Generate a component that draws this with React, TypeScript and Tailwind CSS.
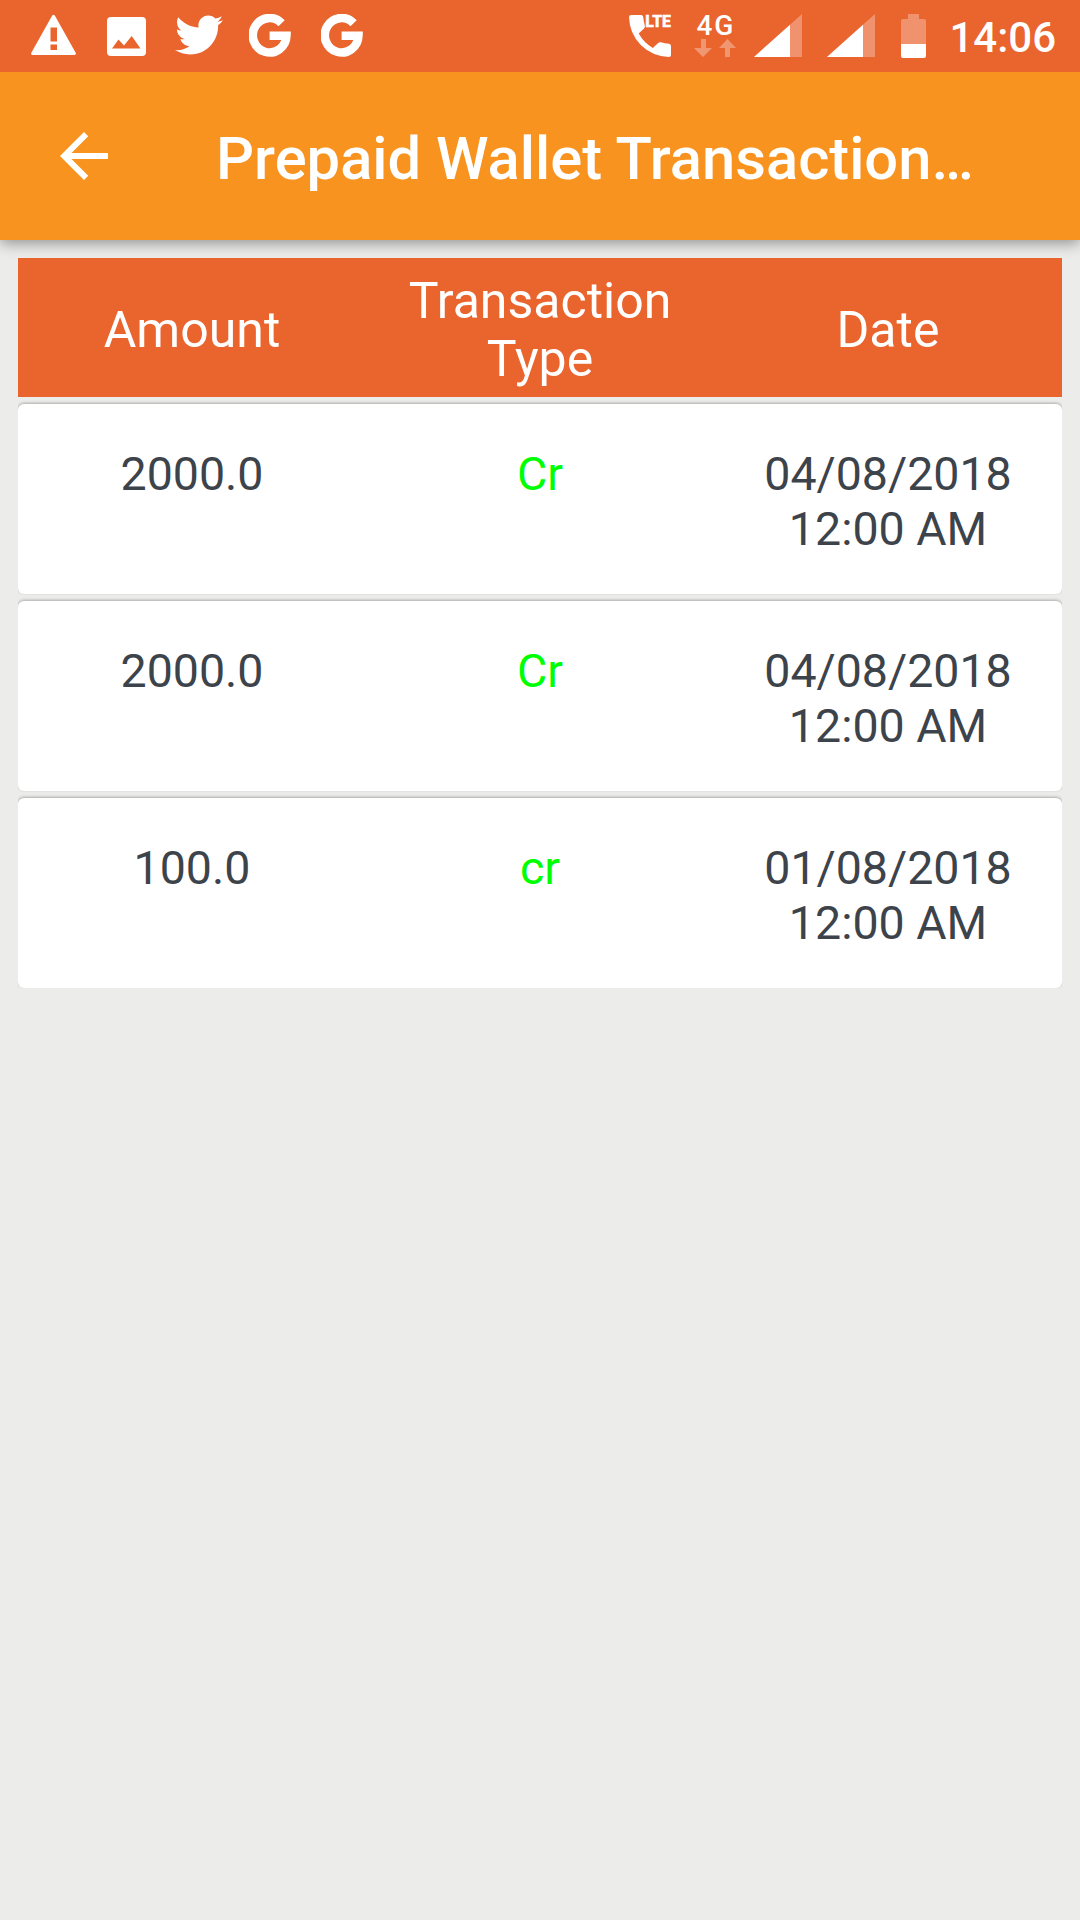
import React from "react";
import { FaTwitter } from "react-icons/fa";

const transactions = [
  { amount: "2000.0", type: "Cr", date: "04/08/2018", time: "12:00 AM" },
  { amount: "2000.0", type: "Cr", date: "04/08/2018", time: "12:00 AM" },
  { amount: "100.0", type: "cr", date: "01/08/2018", time: "12:00 AM" },
];

const GoogleIcon = () => (
  <svg width="42" height="44" viewBox="0 0 42 44" fill="none" stroke="#fff" strokeWidth="8.6">
    <path d="M32.6 9.2A16.8 17.2 0 1 0 37.4 21.8H20.6" />
  </svg>
);

const SignalIcon = () => (
  <svg width="48" height="43" viewBox="0 0 48 43" fill="#fff">
    <path d="M0 43L48 0V43z" opacity="0.3" />
    <path d="M0 43L36 10.75V43z" />
  </svg>
);

const StatusBar = () => (
  <div className="relative z-10 flex h-[72px] items-start bg-[#ea642e] pt-[14px] pl-[31px] text-white">
    <svg width="45" height="42" viewBox="0 0 45 42" fill="#fff">
      <path
        fillRule="evenodd"
        d="M21.2 1.6Q22.5 0 23.8 1.6L44.8 39Q45.4 41 43.5 41H1.5Q-.4 41 .2 39zM19.5 13.5v14h6.500v-14zM19.5 30.500v5.500h6.500v-5.500z"
      />
    </svg>
    <svg className="mt-[3px] ml-[31px]" width="39" height="39" viewBox="0 0 39 39" fill="#fff">
      <path
        fillRule="evenodd"
        d="M4 0h31a4 4 0 0 1 4 4v31a4 4 0 0 1-4 4H4a4 4 0 0 1-4-4V4a4 4 0 0 1 4-4zM5 31.500h28.500L24.700 19 17 28.500 11.500 22.500z"
      />
    </svg>
    <FaTwitter className="mt-[-3px] ml-[29px] size-[48px]" />
    <div className="ml-[26px] flex gap-[30px]">
      <GoogleIcon />
      <GoogleIcon />
    </div>

    <div className="ml-auto flex items-start pr-[24px]">
      <svg className="overflow-visible" width="42" height="44" viewBox="0 0 42 44" fill="#fff">
        <path d="M2.3 1H12Q14.100 1 14.300 3.200Q14.500 7.600 15.800 11.400Q16.300 13 15 14.400L9.700 19.600Q14.700 28.700 23.800 34L29.200 28.900Q30.500 27.800 32 28.300Q35.500 29.600 40 29.800Q42 30 42 32V41Q42 43 39.800 43Q23.500 42.400 12 31.300Q.5 19.500 0 3.200Q0 1 2.300 1z" />
        <text
          x="16.3"
          y="13.2"
          fontSize="17"
          fontWeight="800"
          fontFamily="Roboto, sans-serif"
          textLength="25.6"
          lengthAdjust="spacingAndGlyphs"
          stroke="#fff"
          strokeWidth="0.5"
        >
          LTE
        </text>
      </svg>
      <div className="ml-[22px] flex w-[44px] flex-col items-center">
        <span className="h-[25px] pl-px text-[28px] leading-[24px] font-medium tracking-[2px]">4G</span>
        <svg width="43" height="18" viewBox="0 0 43 18" fill="#fff" opacity="0.32">
          <path d="M7 0h5v9h6L9 18 0 9h7z" />
          <path d="M31 18h5V9h6L33.500 0 25 9h6z" />
        </svg>
      </div>
      <div className="ml-[17px] flex gap-[25px]">
        <SignalIcon />
        <SignalIcon />
      </div>
      <svg className="ml-[26px]" width="25" height="44" viewBox="0 0 25 44" fill="#fff">
        <path d="M7 0h11v5h5q2 0 2 2v23H0V7q0-2 2-2h5z" opacity="0.3" />
        <path d="M0 30h25v12q0 2-2 2H2q-2 0-2-2z" />
      </svg>
      <span className="ml-[23px] pt-px text-[42px] leading-[46px] font-medium">14:06</span>
    </div>
  </div>
);

const AppBar = () => (
  <header className="relative flex h-[168px] items-center bg-[#f7931e] pl-[48px] text-white shadow-[0_3px_14px_rgba(0,0,0,0.4)]">
    <button type="button" className="size-[72px]" aria-label="Back">
      <svg width="72" height="72" viewBox="0 0 24 24" fill="#fff">
        <path d="M20 11H7.830l5.590-5.590L12 4l-8 8 8 8 1.410-1.410L7.830 13H20z" />
      </svg>
    </button>
    <h1 className="ml-[96px] pt-[5px] text-[59.7px] leading-[72px] font-medium whitespace-nowrap">
      Prepaid Wallet Transaction…
    </h1>
  </header>
);

const App = () => {
  return (
    <div className="h-[1920px] w-[1080px] overflow-hidden bg-[#ececeb] font-[Roboto,sans-serif]">
      <StatusBar />
      <AppBar />
      <main className="px-[18px] pt-[18px]">
        <div className="grid h-[139px] grid-cols-3 items-center bg-[#ea642e] pt-[4px] text-center text-[50px] leading-[58px] text-white">
          <div>Amount</div>
          <div>
            Transaction
            <br />
            Type
          </div>
          <div>Date</div>
        </div>

        {/* card shadows are cut at the list edges */}
        <div className="flex flex-col gap-[7px] overflow-hidden pt-[7px]">
          {transactions.map((item, index) => (
            <div
              key={index}
              className="grid h-[190px] grid-cols-3 rounded-[6px] bg-white pt-[43px] text-center text-[46.5px] leading-[55px] text-[#3d434a] shadow-[0_-1px_3px_rgba(0,0,0,0.28)]"
            >
              <div>{item.amount}</div>
              <div className="text-[#00ff00]">{item.type}</div>
              <div>
                {item.date}
                <br />
                {item.time}
              </div>
            </div>
          ))}
        </div>
      </main>
    </div>
  );
};

export default App;
